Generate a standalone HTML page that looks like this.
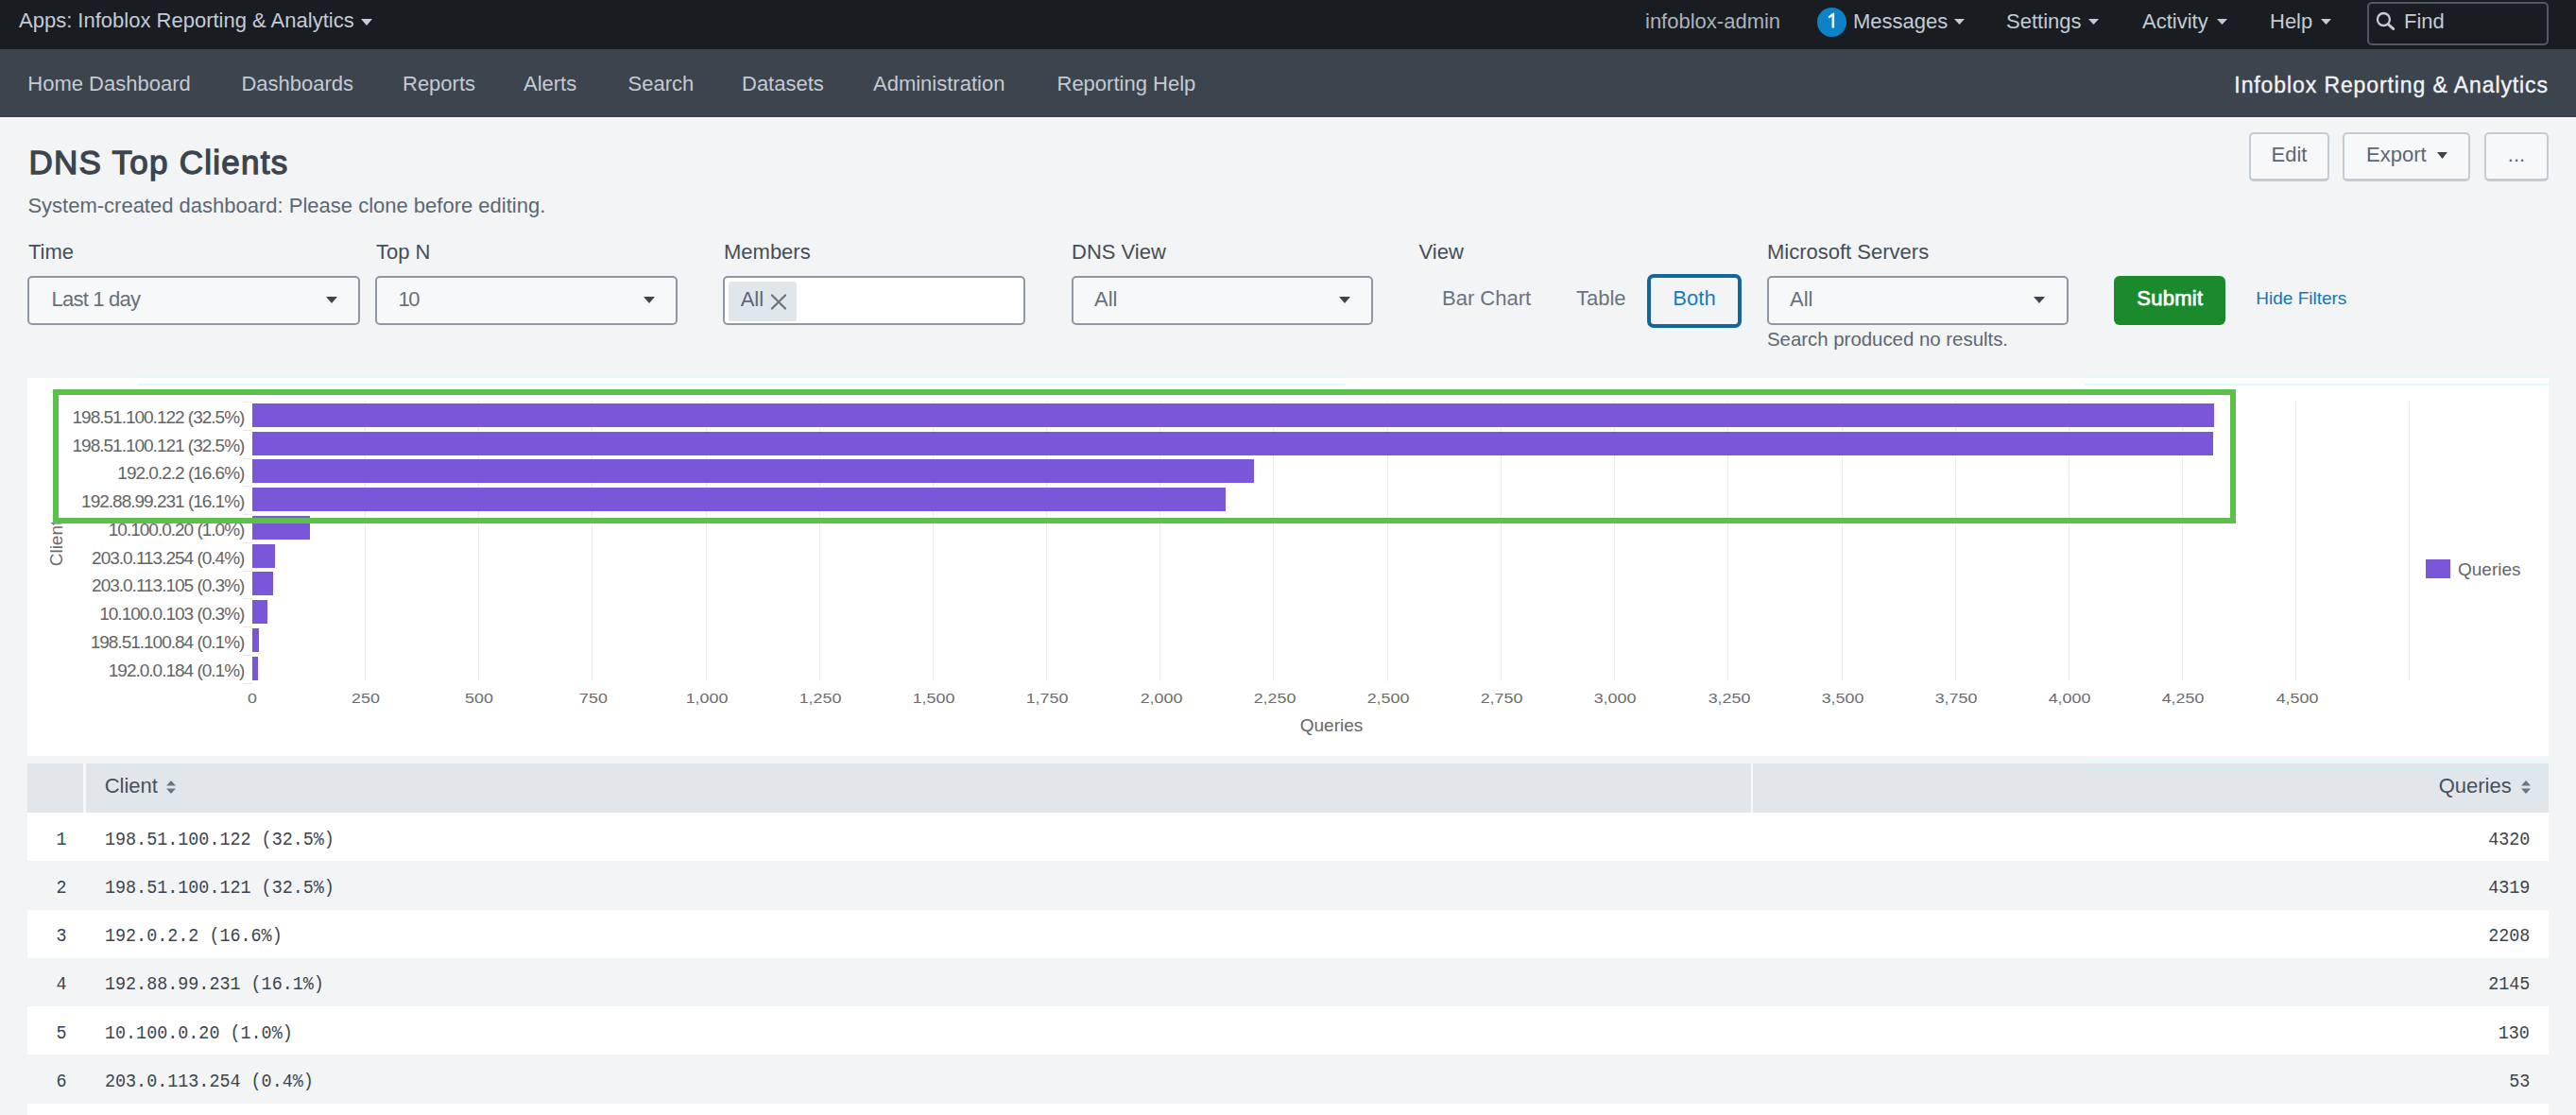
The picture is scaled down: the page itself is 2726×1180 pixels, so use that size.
<!DOCTYPE html>
<html><head><meta charset="utf-8"><title>DNS Top Clients</title>
<style>
html,body{margin:0;padding:0;width:2726px;height:1180px;overflow:hidden;background:#f2f4f5;font-family:"Liberation Sans", sans-serif;}
.b{position:absolute;}
.t{position:absolute;white-space:nowrap;}
</style></head><body>
<div class="b" style="left:0px;top:0px;width:2726px;height:52px;background:#191d21"></div>
<div class="t" style="left:20.00px;top:11.38px;font-size:22px;line-height:22px;color:#c3cbd4;font-weight:400;font-family:'Liberation Sans', sans-serif;">Apps: Infoblox Reporting &amp; Analytics</div>
<svg class="b" style="left:382px;top:20px" width="12" height="7" viewBox="0 0 12 7"><path d="M0 0H12L6.0 7Z" fill="#c3cbd4"/></svg>
<div class="t" style="left:1741.00px;top:11.98px;font-size:22px;line-height:22px;color:#aab2bb;font-weight:400;font-family:'Liberation Sans', sans-serif;">infoblox-admin</div>
<div class="b" style="left:1922.5px;top:7.5px;width:31px;height:31px;border-radius:50%;background:#0b83c6"></div>
<svg class="b" style="left:1930px;top:10px" width="16" height="24" viewBox="0 0 16 24"><path d="M9.8 4.9V19.5" stroke="#e8f7ff" stroke-width="2.6"/><path d="M5.8 8L10.2 4.7" stroke="#e8f7ff" stroke-width="2.2" stroke-linecap="round"/></svg>
<div class="t" style="left:1961.00px;top:11.98px;font-size:22px;line-height:22px;color:#c3cbd4;font-weight:400;font-family:'Liberation Sans', sans-serif;">Messages</div>
<svg class="b" style="left:2067.5px;top:20px" width="11" height="6" viewBox="0 0 11 6"><path d="M0 0H11L5.5 6Z" fill="#c3cbd4"/></svg>
<div class="t" style="left:2123.00px;top:11.98px;font-size:22px;line-height:22px;color:#c3cbd4;font-weight:400;font-family:'Liberation Sans', sans-serif;">Settings</div>
<svg class="b" style="left:2210px;top:20px" width="11" height="6" viewBox="0 0 11 6"><path d="M0 0H11L5.5 6Z" fill="#c3cbd4"/></svg>
<div class="t" style="left:2267.00px;top:11.98px;font-size:22px;line-height:22px;color:#c3cbd4;font-weight:400;font-family:'Liberation Sans', sans-serif;">Activity</div>
<svg class="b" style="left:2345.5px;top:20px" width="11" height="6" viewBox="0 0 11 6"><path d="M0 0H11L5.5 6Z" fill="#c3cbd4"/></svg>
<div class="t" style="left:2402.00px;top:11.98px;font-size:22px;line-height:22px;color:#c3cbd4;font-weight:400;font-family:'Liberation Sans', sans-serif;">Help</div>
<svg class="b" style="left:2455.5px;top:20px" width="11" height="6" viewBox="0 0 11 6"><path d="M0 0H11L5.5 6Z" fill="#c3cbd4"/></svg>
<div class="b" style="left:2505px;top:2px;width:192px;height:46px;border:2px solid #4f5863;border-radius:5px;box-sizing:border-box"></div>
<svg class="b" style="left:2512px;top:12px" width="24" height="24" viewBox="0 0 24 24"><circle cx="10.4" cy="8.5" r="6.5" fill="none" stroke="#c3cbd4" stroke-width="2.3"/><path d="M15.2 13.6L20.8 18.6" stroke="#c3cbd4" stroke-width="2.8" stroke-linecap="round"/></svg>
<div class="t" style="left:2544.00px;top:11.98px;font-size:22px;line-height:22px;color:#c3cbd4;font-weight:400;font-family:'Liberation Sans', sans-serif;">Find</div>
<div class="b" style="left:0px;top:52px;width:2726px;height:72px;background:#3c444d"></div>
<div class="b" style="left:0px;top:122px;width:2726px;height:2px;background:#38404a"></div>
<div class="t" style="left:29.30px;top:77.68px;font-size:22px;line-height:22px;color:#c3cbd4;font-weight:400;font-family:'Liberation Sans', sans-serif;">Home Dashboard</div>
<div class="t" style="left:255.40px;top:77.68px;font-size:22px;line-height:22px;color:#c3cbd4;font-weight:400;font-family:'Liberation Sans', sans-serif;">Dashboards</div>
<div class="t" style="left:426.00px;top:77.68px;font-size:22px;line-height:22px;color:#c3cbd4;font-weight:400;font-family:'Liberation Sans', sans-serif;">Reports</div>
<div class="t" style="left:554.00px;top:77.68px;font-size:22px;line-height:22px;color:#c3cbd4;font-weight:400;font-family:'Liberation Sans', sans-serif;">Alerts</div>
<div class="t" style="left:664.50px;top:77.68px;font-size:22px;line-height:22px;color:#c3cbd4;font-weight:400;font-family:'Liberation Sans', sans-serif;">Search</div>
<div class="t" style="left:785.00px;top:77.68px;font-size:22px;line-height:22px;color:#c3cbd4;font-weight:400;font-family:'Liberation Sans', sans-serif;">Datasets</div>
<div class="t" style="left:924.00px;top:77.68px;font-size:22px;line-height:22px;color:#c3cbd4;font-weight:400;font-family:'Liberation Sans', sans-serif;">Administration</div>
<div class="t" style="left:1118.50px;top:77.68px;font-size:22px;line-height:22px;color:#c3cbd4;font-weight:400;font-family:'Liberation Sans', sans-serif;">Reporting Help</div>
<div class="t" style="right:29.10px;top:78.53px;font-size:23px;line-height:23px;color:#f0f3f6;font-weight:400;font-family:'Liberation Sans', sans-serif;letter-spacing:0.9px;-webkit-text-stroke:0.35px #f0f3f6;">Infoblox Reporting &amp; Analytics</div>
<div class="t" style="left:30.50px;top:153.77px;font-size:35px;line-height:35px;color:#3c444d;font-weight:400;font-family:'Liberation Sans', sans-serif;letter-spacing:1.25px;-webkit-text-stroke:1.3px #3c444d;">DNS Top Clients</div>
<div class="t" style="left:29.40px;top:207.18px;font-size:22px;line-height:22px;color:#5c6773;font-weight:400;font-family:'Liberation Sans', sans-serif;">System-created dashboard: Please clone before editing.</div>
<div class="b" style="left:2380px;top:140px;width:85px;height:52px;background:#f7f8fa;border:2px solid #c3cbd4;border-bottom-width:3px;border-radius:5px;box-sizing:border-box"></div>
<div class="t" style="left:1922.50px;width:1000px;text-align:center;top:153.38px;font-size:22px;line-height:22px;color:#5c6773;font-weight:400;font-family:'Liberation Sans', sans-serif;">Edit</div>
<div class="b" style="left:2479px;top:140px;width:135px;height:52px;background:#f7f8fa;border:2px solid #c3cbd4;border-bottom-width:3px;border-radius:5px;box-sizing:border-box"></div>
<div class="t" style="left:2504.00px;top:153.38px;font-size:22px;line-height:22px;color:#5c6773;font-weight:400;font-family:'Liberation Sans', sans-serif;">Export</div>
<svg class="b" style="left:2579px;top:160.5px" width="11" height="7" viewBox="0 0 11 7"><path d="M0 0H11L5.5 7Z" fill="#3c444d"/></svg>
<div class="b" style="left:2629px;top:140px;width:68px;height:52px;background:#f7f8fa;border:2px solid #c3cbd4;border-bottom-width:3px;border-radius:5px;box-sizing:border-box"></div>
<div class="t" style="left:2163.00px;width:1000px;text-align:center;top:153.38px;font-size:22px;line-height:22px;color:#5c6773;font-weight:400;font-family:'Liberation Sans', sans-serif;">...</div>
<div class="t" style="left:30.00px;top:255.88px;font-size:22px;line-height:22px;color:#454e58;font-weight:400;font-family:'Liberation Sans', sans-serif;">Time</div>
<div class="t" style="left:398.00px;top:255.88px;font-size:22px;line-height:22px;color:#454e58;font-weight:400;font-family:'Liberation Sans', sans-serif;">Top N</div>
<div class="t" style="left:766.00px;top:255.88px;font-size:22px;line-height:22px;color:#454e58;font-weight:400;font-family:'Liberation Sans', sans-serif;">Members</div>
<div class="t" style="left:1134.00px;top:255.88px;font-size:22px;line-height:22px;color:#454e58;font-weight:400;font-family:'Liberation Sans', sans-serif;">DNS View</div>
<div class="t" style="left:1501.50px;top:255.88px;font-size:22px;line-height:22px;color:#454e58;font-weight:400;font-family:'Liberation Sans', sans-serif;">View</div>
<div class="t" style="left:1870.00px;top:255.88px;font-size:22px;line-height:22px;color:#454e58;font-weight:400;font-family:'Liberation Sans', sans-serif;">Microsoft Servers</div>
<div class="b" style="left:29px;top:292px;width:352px;height:52px;background:#f7f8fa;border:2px solid #8f98a2;border-radius:5px;box-sizing:border-box"></div>
<div class="t" style="left:54.60px;top:306.18px;font-size:22px;line-height:22px;color:#66707b;font-weight:400;font-family:'Liberation Sans', sans-serif;letter-spacing:-0.8px;">Last 1 day</div>
<svg class="b" style="left:344.5px;top:314px" width="12" height="7" viewBox="0 0 12 7"><path d="M0 0H12L6.0 7Z" fill="#3c444d"/></svg>
<div class="b" style="left:397px;top:292px;width:320px;height:52px;background:#f7f8fa;border:2px solid #8f98a2;border-radius:5px;box-sizing:border-box"></div>
<div class="t" style="left:421.40px;top:306.18px;font-size:22px;line-height:22px;color:#66707b;font-weight:400;font-family:'Liberation Sans', sans-serif;letter-spacing:-1.5px;">10</div>
<svg class="b" style="left:681px;top:314px" width="12" height="7" viewBox="0 0 12 7"><path d="M0 0H12L6.0 7Z" fill="#3c444d"/></svg>
<div class="b" style="left:765px;top:292px;width:320px;height:52px;background:#ffffff;border:2px solid #8f98a2;border-radius:5px;box-sizing:border-box"></div>
<div class="b" style="left:771px;top:298px;width:72px;height:42px;background:#e1e6eb;border-radius:3px"></div>
<div class="t" style="left:783.70px;top:306.18px;font-size:22px;line-height:22px;color:#5c6773;font-weight:400;font-family:'Liberation Sans', sans-serif;">All</div>
<svg class="b" style="left:815px;top:311px" width="18" height="17" viewBox="0 0 18 17"><path d="M2 1.5L16 15.5M16 1.5L2 15.5" stroke="#6b7580" stroke-width="2.3" stroke-linecap="round"/></svg>
<div class="b" style="left:1134px;top:292px;width:319px;height:52px;background:#f7f8fa;border:2px solid #8f98a2;border-radius:5px;box-sizing:border-box"></div>
<div class="t" style="left:1158.00px;top:306.18px;font-size:22px;line-height:22px;color:#66707b;font-weight:400;font-family:'Liberation Sans', sans-serif;">All</div>
<svg class="b" style="left:1416.5px;top:314px" width="12" height="7" viewBox="0 0 12 7"><path d="M0 0H12L6.0 7Z" fill="#3c444d"/></svg>
<div class="t" style="left:1526.00px;top:305.38px;font-size:22px;line-height:22px;color:#6b7480;font-weight:400;font-family:'Liberation Sans', sans-serif;">Bar Chart</div>
<div class="t" style="left:1668.00px;top:305.38px;font-size:22px;line-height:22px;color:#6b7480;font-weight:400;font-family:'Liberation Sans', sans-serif;">Table</div>
<div class="b" style="left:1743px;top:290px;width:100px;height:57px;border:4px solid #11669d;border-radius:7px;box-sizing:border-box;background:#f2f4f5"></div>
<div class="t" style="left:1293.00px;width:1000px;text-align:center;top:305.38px;font-size:22px;line-height:22px;color:#1a7cbd;font-weight:400;font-family:'Liberation Sans', sans-serif;">Both</div>
<div class="b" style="left:1870px;top:292px;width:319px;height:52px;background:#f7f8fa;border:2px solid #8f98a2;border-radius:5px;box-sizing:border-box"></div>
<div class="t" style="left:1894.00px;top:306.18px;font-size:22px;line-height:22px;color:#66707b;font-weight:400;font-family:'Liberation Sans', sans-serif;">All</div>
<svg class="b" style="left:2152px;top:314px" width="12" height="7" viewBox="0 0 12 7"><path d="M0 0H12L6.0 7Z" fill="#3c444d"/></svg>
<div class="t" style="left:1870.00px;top:349.13px;font-size:20.4px;line-height:20.4px;color:#5c6773;font-weight:400;font-family:'Liberation Sans', sans-serif;">Search produced no results.</div>
<div class="b" style="left:2237px;top:292px;width:118px;height:52px;background:#1b8a2c;border-radius:6px"></div>
<div class="t" style="left:1796.30px;width:1000px;text-align:center;top:305.18px;font-size:22px;line-height:22px;color:#ffffff;font-weight:400;font-family:'Liberation Sans', sans-serif;letter-spacing:0.3px;-webkit-text-stroke:0.75px #ffffff;">Submit</div>
<div class="t" style="left:2387.30px;top:305.62px;font-size:19px;line-height:19px;color:#1a73b8;font-weight:400;font-family:'Liberation Sans', sans-serif;">Hide Filters</div>
<div class="b" style="left:29px;top:400px;width:2668px;height:400px;background:#ffffff"></div>
<div class="b" style="left:386px;top:425px;width:2px;height:296px;background:#ededed;width:1.3px"></div>
<div class="b" style="left:506px;top:425px;width:2px;height:296px;background:#ededed;width:1.3px"></div>
<div class="b" style="left:626px;top:425px;width:2px;height:296px;background:#ededed;width:1.3px"></div>
<div class="b" style="left:747px;top:425px;width:2px;height:296px;background:#ededed;width:1.3px"></div>
<div class="b" style="left:867px;top:425px;width:2px;height:296px;background:#ededed;width:1.3px"></div>
<div class="b" style="left:987px;top:425px;width:2px;height:296px;background:#ededed;width:1.3px"></div>
<div class="b" style="left:1107px;top:425px;width:2px;height:296px;background:#ededed;width:1.3px"></div>
<div class="b" style="left:1227px;top:425px;width:2px;height:296px;background:#ededed;width:1.3px"></div>
<div class="b" style="left:1347px;top:425px;width:2px;height:296px;background:#ededed;width:1.3px"></div>
<div class="b" style="left:1468px;top:425px;width:2px;height:296px;background:#ededed;width:1.3px"></div>
<div class="b" style="left:1588px;top:425px;width:2px;height:296px;background:#ededed;width:1.3px"></div>
<div class="b" style="left:1708px;top:425px;width:2px;height:296px;background:#ededed;width:1.3px"></div>
<div class="b" style="left:1828px;top:425px;width:2px;height:296px;background:#ededed;width:1.3px"></div>
<div class="b" style="left:1949px;top:425px;width:2px;height:296px;background:#ededed;width:1.3px"></div>
<div class="b" style="left:2069px;top:425px;width:2px;height:296px;background:#ededed;width:1.3px"></div>
<div class="b" style="left:2189px;top:425px;width:2px;height:296px;background:#ededed;width:1.3px"></div>
<div class="b" style="left:2309px;top:425px;width:2px;height:296px;background:#ededed;width:1.3px"></div>
<div class="b" style="left:2429px;top:425px;width:2px;height:296px;background:#ededed;width:1.3px"></div>
<div class="b" style="left:2549px;top:425px;width:2px;height:296px;background:#ededed;width:1.3px"></div>
<div class="b" style="left:266.7px;top:426.80px;width:2075.86px;height:25px;background:#7a57d8"></div>
<div class="t" style="right:2467.60px;top:431.72px;font-size:19px;line-height:19px;color:#646464;font-weight:400;font-family:'Liberation Sans', sans-serif;letter-spacing:-1px;">198.51.100.122 (32.5%)</div>
<div class="b" style="left:266.7px;top:456.58px;width:2075.38px;height:25px;background:#7a57d8"></div>
<div class="t" style="right:2467.60px;top:461.50px;font-size:19px;line-height:19px;color:#646464;font-weight:400;font-family:'Liberation Sans', sans-serif;letter-spacing:-1px;">198.51.100.121 (32.5%)</div>
<div class="b" style="left:266.7px;top:486.36px;width:1060.41px;height:25px;background:#7a57d8"></div>
<div class="t" style="right:2467.60px;top:491.28px;font-size:19px;line-height:19px;color:#646464;font-weight:400;font-family:'Liberation Sans', sans-serif;letter-spacing:-1px;">192.0.2.2 (16.6%)</div>
<div class="b" style="left:266.7px;top:516.14px;width:1030.12px;height:25px;background:#7a57d8"></div>
<div class="t" style="right:2467.60px;top:521.06px;font-size:19px;line-height:19px;color:#646464;font-weight:400;font-family:'Liberation Sans', sans-serif;letter-spacing:-1px;">192.88.99.231 (16.1%)</div>
<div class="b" style="left:266.7px;top:545.92px;width:61.30px;height:25px;background:#7a57d8"></div>
<div class="t" style="right:2467.60px;top:550.84px;font-size:19px;line-height:19px;color:#646464;font-weight:400;font-family:'Liberation Sans', sans-serif;letter-spacing:-1px;">10.100.0.20 (1.0%)</div>
<div class="b" style="left:266.7px;top:575.70px;width:24.28px;height:25px;background:#7a57d8"></div>
<div class="t" style="right:2467.60px;top:580.62px;font-size:19px;line-height:19px;color:#646464;font-weight:400;font-family:'Liberation Sans', sans-serif;letter-spacing:-1px;">203.0.113.254 (0.4%)</div>
<div class="b" style="left:266.7px;top:605.48px;width:21.88px;height:25px;background:#7a57d8"></div>
<div class="t" style="right:2467.60px;top:610.40px;font-size:19px;line-height:19px;color:#646464;font-weight:400;font-family:'Liberation Sans', sans-serif;letter-spacing:-1px;">203.0.113.105 (0.3%)</div>
<div class="b" style="left:266.7px;top:635.26px;width:16.11px;height:25px;background:#7a57d8"></div>
<div class="t" style="right:2467.60px;top:640.18px;font-size:19px;line-height:19px;color:#646464;font-weight:400;font-family:'Liberation Sans', sans-serif;letter-spacing:-1px;">10.100.0.103 (0.3%)</div>
<div class="b" style="left:266.7px;top:665.04px;width:6.97px;height:25px;background:#7a57d8"></div>
<div class="t" style="right:2467.60px;top:669.96px;font-size:19px;line-height:19px;color:#646464;font-weight:400;font-family:'Liberation Sans', sans-serif;letter-spacing:-1px;">198.51.100.84 (0.1%)</div>
<div class="b" style="left:266.7px;top:694.82px;width:6.01px;height:25px;background:#7a57d8"></div>
<div class="t" style="right:2467.60px;top:699.74px;font-size:19px;line-height:19px;color:#646464;font-weight:400;font-family:'Liberation Sans', sans-serif;letter-spacing:-1px;">192.0.0.184 (0.1%)</div>
<div class="b" style="left:257px;top:425px;width:10px;height:1px;background:#e8e8e8"></div>
<div class="b" style="left:257px;top:455px;width:10px;height:1px;background:#e8e8e8"></div>
<div class="b" style="left:257px;top:485px;width:10px;height:1px;background:#e8e8e8"></div>
<div class="b" style="left:257px;top:514px;width:10px;height:1px;background:#e8e8e8"></div>
<div class="b" style="left:257px;top:544px;width:10px;height:1px;background:#e8e8e8"></div>
<div class="b" style="left:257px;top:574px;width:10px;height:1px;background:#e8e8e8"></div>
<div class="b" style="left:257px;top:604px;width:10px;height:1px;background:#e8e8e8"></div>
<div class="b" style="left:257px;top:633px;width:10px;height:1px;background:#e8e8e8"></div>
<div class="b" style="left:257px;top:663px;width:10px;height:1px;background:#e8e8e8"></div>
<div class="b" style="left:257px;top:693px;width:10px;height:1px;background:#e8e8e8"></div>
<div class="b" style="left:257px;top:723px;width:10px;height:1px;background:#e8e8e8"></div>
<div class="t" style="left:-233.00px;width:1000px;text-align:center;top:731.73px;font-size:14.5px;line-height:14.5px;color:#6c6c6c;font-weight:400;font-family:'Liberation Sans', sans-serif;transform:scaleX(1.23);transform-origin:center top;">0</div>
<div class="t" style="left:-112.80px;width:1000px;text-align:center;top:731.73px;font-size:14.5px;line-height:14.5px;color:#6c6c6c;font-weight:400;font-family:'Liberation Sans', sans-serif;transform:scaleX(1.23);transform-origin:center top;">250</div>
<div class="t" style="left:7.40px;width:1000px;text-align:center;top:731.73px;font-size:14.5px;line-height:14.5px;color:#6c6c6c;font-weight:400;font-family:'Liberation Sans', sans-serif;transform:scaleX(1.23);transform-origin:center top;">500</div>
<div class="t" style="left:127.60px;width:1000px;text-align:center;top:731.73px;font-size:14.5px;line-height:14.5px;color:#6c6c6c;font-weight:400;font-family:'Liberation Sans', sans-serif;transform:scaleX(1.23);transform-origin:center top;">750</div>
<div class="t" style="left:247.80px;width:1000px;text-align:center;top:731.73px;font-size:14.5px;line-height:14.5px;color:#6c6c6c;font-weight:400;font-family:'Liberation Sans', sans-serif;transform:scaleX(1.23);transform-origin:center top;">1,000</div>
<div class="t" style="left:368.00px;width:1000px;text-align:center;top:731.73px;font-size:14.5px;line-height:14.5px;color:#6c6c6c;font-weight:400;font-family:'Liberation Sans', sans-serif;transform:scaleX(1.23);transform-origin:center top;">1,250</div>
<div class="t" style="left:488.20px;width:1000px;text-align:center;top:731.73px;font-size:14.5px;line-height:14.5px;color:#6c6c6c;font-weight:400;font-family:'Liberation Sans', sans-serif;transform:scaleX(1.23);transform-origin:center top;">1,500</div>
<div class="t" style="left:608.40px;width:1000px;text-align:center;top:731.73px;font-size:14.5px;line-height:14.5px;color:#6c6c6c;font-weight:400;font-family:'Liberation Sans', sans-serif;transform:scaleX(1.23);transform-origin:center top;">1,750</div>
<div class="t" style="left:728.60px;width:1000px;text-align:center;top:731.73px;font-size:14.5px;line-height:14.5px;color:#6c6c6c;font-weight:400;font-family:'Liberation Sans', sans-serif;transform:scaleX(1.23);transform-origin:center top;">2,000</div>
<div class="t" style="left:848.80px;width:1000px;text-align:center;top:731.73px;font-size:14.5px;line-height:14.5px;color:#6c6c6c;font-weight:400;font-family:'Liberation Sans', sans-serif;transform:scaleX(1.23);transform-origin:center top;">2,250</div>
<div class="t" style="left:969.00px;width:1000px;text-align:center;top:731.73px;font-size:14.5px;line-height:14.5px;color:#6c6c6c;font-weight:400;font-family:'Liberation Sans', sans-serif;transform:scaleX(1.23);transform-origin:center top;">2,500</div>
<div class="t" style="left:1089.20px;width:1000px;text-align:center;top:731.73px;font-size:14.5px;line-height:14.5px;color:#6c6c6c;font-weight:400;font-family:'Liberation Sans', sans-serif;transform:scaleX(1.23);transform-origin:center top;">2,750</div>
<div class="t" style="left:1209.40px;width:1000px;text-align:center;top:731.73px;font-size:14.5px;line-height:14.5px;color:#6c6c6c;font-weight:400;font-family:'Liberation Sans', sans-serif;transform:scaleX(1.23);transform-origin:center top;">3,000</div>
<div class="t" style="left:1329.60px;width:1000px;text-align:center;top:731.73px;font-size:14.5px;line-height:14.5px;color:#6c6c6c;font-weight:400;font-family:'Liberation Sans', sans-serif;transform:scaleX(1.23);transform-origin:center top;">3,250</div>
<div class="t" style="left:1449.80px;width:1000px;text-align:center;top:731.73px;font-size:14.5px;line-height:14.5px;color:#6c6c6c;font-weight:400;font-family:'Liberation Sans', sans-serif;transform:scaleX(1.23);transform-origin:center top;">3,500</div>
<div class="t" style="left:1570.00px;width:1000px;text-align:center;top:731.73px;font-size:14.5px;line-height:14.5px;color:#6c6c6c;font-weight:400;font-family:'Liberation Sans', sans-serif;transform:scaleX(1.23);transform-origin:center top;">3,750</div>
<div class="t" style="left:1690.20px;width:1000px;text-align:center;top:731.73px;font-size:14.5px;line-height:14.5px;color:#6c6c6c;font-weight:400;font-family:'Liberation Sans', sans-serif;transform:scaleX(1.23);transform-origin:center top;">4,000</div>
<div class="t" style="left:1810.40px;width:1000px;text-align:center;top:731.73px;font-size:14.5px;line-height:14.5px;color:#6c6c6c;font-weight:400;font-family:'Liberation Sans', sans-serif;transform:scaleX(1.23);transform-origin:center top;">4,250</div>
<div class="t" style="left:1930.60px;width:1000px;text-align:center;top:731.73px;font-size:14.5px;line-height:14.5px;color:#6c6c6c;font-weight:400;font-family:'Liberation Sans', sans-serif;transform:scaleX(1.23);transform-origin:center top;">4,500</div>
<div class="t" style="left:909.00px;width:1000px;text-align:center;top:757.72px;font-size:19px;line-height:19px;color:#666666;font-weight:400;font-family:'Liberation Sans', sans-serif;">Queries</div>
<div class="t" style="left:30px;top:564.5px;width:60px;height:20px;transform:rotate(-90deg);font-size:19px;line-height:20px;color:#6a6a6a;font-family:'Liberation Sans', sans-serif;text-align:center;">Client</div>
<div class="b" style="left:2567px;top:592px;width:26px;height:20px;background:#7a57d8"></div>
<div class="t" style="left:2601.00px;top:592.92px;font-size:19px;line-height:19px;color:#666666;font-weight:400;font-family:'Liberation Sans', sans-serif;">Queries</div>
<div class="b" style="left:145px;top:398px;width:1279px;height:2px;background:#e2f8fb"></div>
<div class="b" style="left:145px;top:406px;width:1279px;height:2px;background:#ddfcfe"></div>
<div class="b" style="left:2206px;top:398px;width:491px;height:2px;background:#e2f8fb"></div>
<div class="b" style="left:2206px;top:406px;width:491px;height:2px;background:#ddfcfe"></div>
<div class="b" style="left:56px;top:412px;width:2310px;height:142px;border:6px solid #5cc04a;box-sizing:border-box"></div>
<div class="b" style="left:29px;top:808px;width:2668px;height:52px;background:#e1e6eb"></div>
<div class="b" style="left:88px;top:808px;width:3px;height:52px;background:#f7f8fa"></div>
<div class="b" style="left:1853px;top:808px;width:2px;height:52px;background:#f7f8fa"></div>
<div class="b" style="left:2209px;top:806px;width:488px;height:2px;background:#e2f9fc"></div>
<div class="b" style="left:2209px;top:814px;width:488px;height:2px;background:#d3ecf4"></div>
<div class="t" style="left:110.70px;top:821.38px;font-size:22px;line-height:22px;color:#48515b;font-weight:400;font-family:'Liberation Sans', sans-serif;">Client</div>
<svg class="b" style="left:175px;top:825px" width="12" height="16" viewBox="0 0 12 16"><path d="M1 6.5L6 1L11 6.5Z M1 9.5L6 15L11 9.5Z" fill="#6b7480"/></svg>
<div class="t" style="right:68.30px;top:821.38px;font-size:22px;line-height:22px;color:#48515b;font-weight:400;font-family:'Liberation Sans', sans-serif;">Queries</div>
<svg class="b" style="left:2667px;top:825px" width="12" height="16" viewBox="0 0 12 16"><path d="M1 6.5L6 1L11 6.5Z M1 9.5L6 15L11 9.5Z" fill="#6b7480"/></svg>
<div class="b" style="left:29px;top:860.00px;width:2668px;height:51.77px;background:#ffffff"></div>
<div class="t" style="right:2655.50px;top:877.50px;font-size:21px;line-height:21px;color:#3c444d;font-weight:400;font-family:'Liberation Mono', monospace;transform:scaleX(0.876);transform-origin:right top;">1</div>
<div class="t" style="left:110.50px;top:877.50px;font-size:21px;line-height:21px;color:#3c444d;font-weight:400;font-family:'Liberation Mono', monospace;transform:scaleX(0.876);transform-origin:left top;">198.51.100.122 (32.5%)</div>
<div class="t" style="right:48.80px;top:877.50px;font-size:21px;line-height:21px;color:#3c444d;font-weight:400;font-family:'Liberation Mono', monospace;transform:scaleX(0.876);transform-origin:right top;">4320</div>
<div class="b" style="left:29px;top:911.27px;width:2668px;height:51.77px;background:#f2f4f5"></div>
<div class="t" style="right:2655.50px;top:928.77px;font-size:21px;line-height:21px;color:#3c444d;font-weight:400;font-family:'Liberation Mono', monospace;transform:scaleX(0.876);transform-origin:right top;">2</div>
<div class="t" style="left:110.50px;top:928.77px;font-size:21px;line-height:21px;color:#3c444d;font-weight:400;font-family:'Liberation Mono', monospace;transform:scaleX(0.876);transform-origin:left top;">198.51.100.121 (32.5%)</div>
<div class="t" style="right:48.80px;top:928.77px;font-size:21px;line-height:21px;color:#3c444d;font-weight:400;font-family:'Liberation Mono', monospace;transform:scaleX(0.876);transform-origin:right top;">4319</div>
<div class="b" style="left:29px;top:962.54px;width:2668px;height:51.77px;background:#ffffff"></div>
<div class="t" style="right:2655.50px;top:980.04px;font-size:21px;line-height:21px;color:#3c444d;font-weight:400;font-family:'Liberation Mono', monospace;transform:scaleX(0.876);transform-origin:right top;">3</div>
<div class="t" style="left:110.50px;top:980.04px;font-size:21px;line-height:21px;color:#3c444d;font-weight:400;font-family:'Liberation Mono', monospace;transform:scaleX(0.876);transform-origin:left top;">192.0.2.2 (16.6%)</div>
<div class="t" style="right:48.80px;top:980.04px;font-size:21px;line-height:21px;color:#3c444d;font-weight:400;font-family:'Liberation Mono', monospace;transform:scaleX(0.876);transform-origin:right top;">2208</div>
<div class="b" style="left:29px;top:1013.81px;width:2668px;height:51.77px;background:#f2f4f5"></div>
<div class="t" style="right:2655.50px;top:1031.31px;font-size:21px;line-height:21px;color:#3c444d;font-weight:400;font-family:'Liberation Mono', monospace;transform:scaleX(0.876);transform-origin:right top;">4</div>
<div class="t" style="left:110.50px;top:1031.31px;font-size:21px;line-height:21px;color:#3c444d;font-weight:400;font-family:'Liberation Mono', monospace;transform:scaleX(0.876);transform-origin:left top;">192.88.99.231 (16.1%)</div>
<div class="t" style="right:48.80px;top:1031.31px;font-size:21px;line-height:21px;color:#3c444d;font-weight:400;font-family:'Liberation Mono', monospace;transform:scaleX(0.876);transform-origin:right top;">2145</div>
<div class="b" style="left:29px;top:1065.08px;width:2668px;height:51.77px;background:#ffffff"></div>
<div class="t" style="right:2655.50px;top:1082.58px;font-size:21px;line-height:21px;color:#3c444d;font-weight:400;font-family:'Liberation Mono', monospace;transform:scaleX(0.876);transform-origin:right top;">5</div>
<div class="t" style="left:110.50px;top:1082.58px;font-size:21px;line-height:21px;color:#3c444d;font-weight:400;font-family:'Liberation Mono', monospace;transform:scaleX(0.876);transform-origin:left top;">10.100.0.20 (1.0%)</div>
<div class="t" style="right:48.80px;top:1082.58px;font-size:21px;line-height:21px;color:#3c444d;font-weight:400;font-family:'Liberation Mono', monospace;transform:scaleX(0.876);transform-origin:right top;">130</div>
<div class="b" style="left:29px;top:1116.35px;width:2668px;height:51.77px;background:#f2f4f5"></div>
<div class="t" style="right:2655.50px;top:1133.85px;font-size:21px;line-height:21px;color:#3c444d;font-weight:400;font-family:'Liberation Mono', monospace;transform:scaleX(0.876);transform-origin:right top;">6</div>
<div class="t" style="left:110.50px;top:1133.85px;font-size:21px;line-height:21px;color:#3c444d;font-weight:400;font-family:'Liberation Mono', monospace;transform:scaleX(0.876);transform-origin:left top;">203.0.113.254 (0.4%)</div>
<div class="t" style="right:48.80px;top:1133.85px;font-size:21px;line-height:21px;color:#3c444d;font-weight:400;font-family:'Liberation Mono', monospace;transform:scaleX(0.876);transform-origin:right top;">53</div>
<div class="b" style="left:29px;top:1167.62px;width:2668px;height:51.77px;background:#ffffff"></div>
<div class="t" style="right:2655.50px;top:1185.12px;font-size:21px;line-height:21px;color:#3c444d;font-weight:400;font-family:'Liberation Mono', monospace;transform:scaleX(0.876);transform-origin:right top;">7</div>
<div class="t" style="left:110.50px;top:1185.12px;font-size:21px;line-height:21px;color:#3c444d;font-weight:400;font-family:'Liberation Mono', monospace;transform:scaleX(0.876);transform-origin:left top;">203.0.113.105 (0.3%)</div>
<div class="t" style="right:48.80px;top:1185.12px;font-size:21px;line-height:21px;color:#3c444d;font-weight:400;font-family:'Liberation Mono', monospace;transform:scaleX(0.876);transform-origin:right top;">45</div>
</body></html>
